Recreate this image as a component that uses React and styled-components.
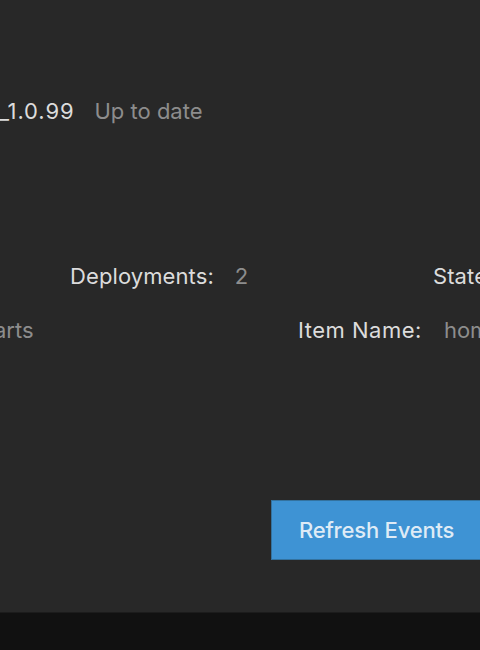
import React from 'react'
import styled, { createGlobalStyle } from 'styled-components'

const GlobalStyle = createGlobalStyle`
  html, body {
    margin: 0;
    padding: 0;
    background: #282828;
    overflow: hidden;
  }
  body {
    font-family: 'Inter', 'Noto Sans', sans-serif;
  }
`

const Page = styled.div`
  width: 480px;
  height: 650px;
  display: flex;
  flex-direction: column;
  overflow: hidden;
`

const Main = styled.main`
  flex: 1;
  background: #282828;
  padding-top: 96px;
  display: flex;
  flex-direction: column;
`

const Footer = styled.footer`
  height: 37px;
  background: #111111;
  border-top: 1px solid #1c1c1c;
`

const Row = styled.div`
  display: flex;
  align-items: center;
  height: 30px;
  margin-top: ${p => p.top || 0}px;
  padding-left: ${p => p.indent || 0}px;
  white-space: nowrap;
`

const Cell = styled.div`
  display: flex;
  align-items: center;
  gap: ${p => p.gap || 21}px;
  flex: none;
  width: ${p => (p.width ? `${p.width}px` : 'auto')};
  margin-left: ${p => p.shift || 0}px;
`

const Label = styled.span`
  font-size: 22px;
  line-height: 30px;
  color: #dcdcdc;
  letter-spacing: ${p => p.spacing || 0.1}px;
`

const Value = styled.span`
  font-size: 22px;
  line-height: 30px;
  color: #8d8d8d;
`

const Actions = styled.div`
  display: flex;
  margin-top: 155px;
  padding-left: 271px;
`

const Button = styled.button`
  flex: none;
  height: 60px;
  padding: 0 27px;
  background: #3e93d4;
  border: 1px solid #33729f;
  border-radius: 0;
  color: #deebf6;
  font-family: 'Inter', 'Noto Sans', sans-serif;
  font-size: 22px;
  font-weight: 500;
  letter-spacing: -0.2px;
  white-space: nowrap;
  cursor: pointer;
`

export default function App() {
  return (
    <Page>
      <GlobalStyle />
      <Main>
        <Row>
          <Cell shift={-1} gap={20}>
            <Label spacing={0.9}>_1.0.99</Label>
            <Value>Up to date</Value>
          </Cell>
        </Row>

        <Row top={135} indent={70}>
          <Cell width={363}>
            <Label>Deployments:</Label>
            <Value>2</Value>
          </Cell>
          <Cell>
            <Label>State:</Label>
            <Value>ACTIVE</Value>
          </Cell>
        </Row>

        <Row top={24}>
          <Cell width={304} shift={-6}>
            <Value>arts</Value>
          </Cell>
          <Cell gap={22}>
            <Label spacing={0.5}>Item Name:</Label>
            <Value>home-assistant</Value>
          </Cell>
        </Row>

        <Actions>
          <Button>Refresh Events</Button>
        </Actions>
      </Main>
      <Footer />
    </Page>
  )
}
